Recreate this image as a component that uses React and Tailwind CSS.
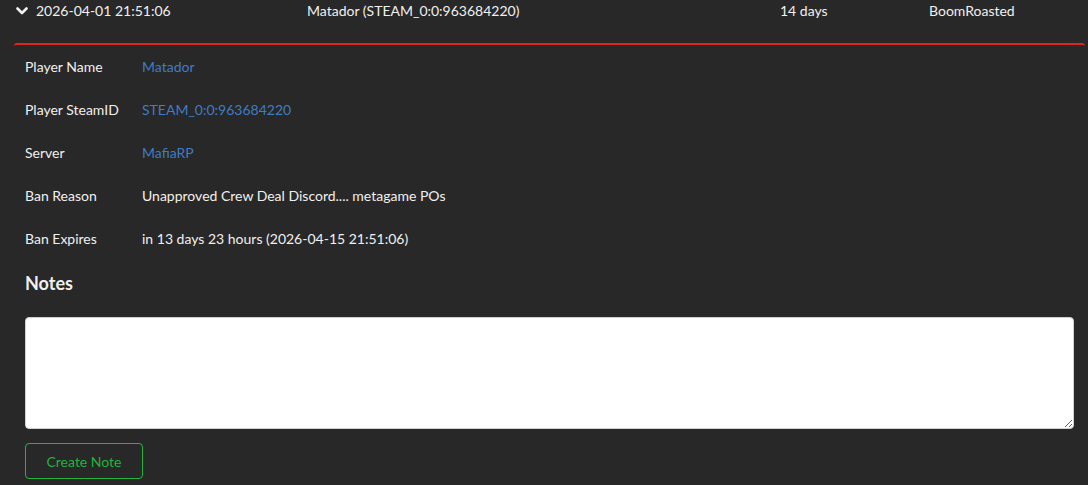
export default function App() {
  const rows = [
    { label: "Player Name", value: "Matador", link: true },
    { label: "Player SteamID", value: "STEAM_0:0:963684220", link: true },
    { label: "Server", value: "MafiaRP", link: true },
    { label: "Ban Reason", value: "Unapproved Crew Deal Discord.... metagame POs" },
    { label: "Ban Expires", value: "in 13 days 23 hours (2026-04-15 21:51:06)" },
  ];
  return (
    <div
      className="w-[1088px] h-[485px] overflow-hidden bg-[#282828] text-[#f0f0f0] text-[14px]"
      style={{ fontFamily: "Lato, 'Noto Sans', sans-serif" }}
    >
      <div className="flex h-[43px] pt-px leading-5">
        <div className="w-[307px] flex items-start pl-[16px]">
          <svg width="12" height="20" viewBox="0 0 12 20" className="shrink-0">
            <polyline points="1.5,7.5 6,12 10.5,7.5" fill="none" stroke="#f0f0f0" strokeWidth="2.6" strokeLinecap="round" strokeLinejoin="round" />
          </svg>
          <span className="ml-[8px]">2026-04-01 21:51:06</span>
        </div>
        <div className="w-[473px]">Matador (STEAM_0:0:963684220)</div>
        <div className="w-[149px]">14 days</div>
        <div>BoomRoasted</div>
      </div>
      <div className="ml-[14px] w-[1071px] border-t-2 border-[#e02424] rounded-t-[3px] px-[11px]">
        <div className="flex flex-col">
          {rows.map((r) => (
            <div key={r.label} className="flex items-center h-[43px] leading-5">
              <div className="w-[117px]">{r.label}</div>
              <div className={r.link ? "text-[#3f7cc4]" : ""}>{r.value}</div>
            </div>
          ))}
        </div>
        <h2 className="mt-[11px] text-[18px] font-bold leading-6">Notes</h2>
        <textarea className="mt-[22px] block w-full h-[112px] bg-white border border-[#d0d0d0] rounded-[4px] text-black p-2" />
        <button className="mt-[14px] w-[118px] h-[36px] border border-[#22b43c] rounded-[4px] text-[#22b43c] text-[14px]">
          Create Note
        </button>
      </div>
    </div>
  );
}
